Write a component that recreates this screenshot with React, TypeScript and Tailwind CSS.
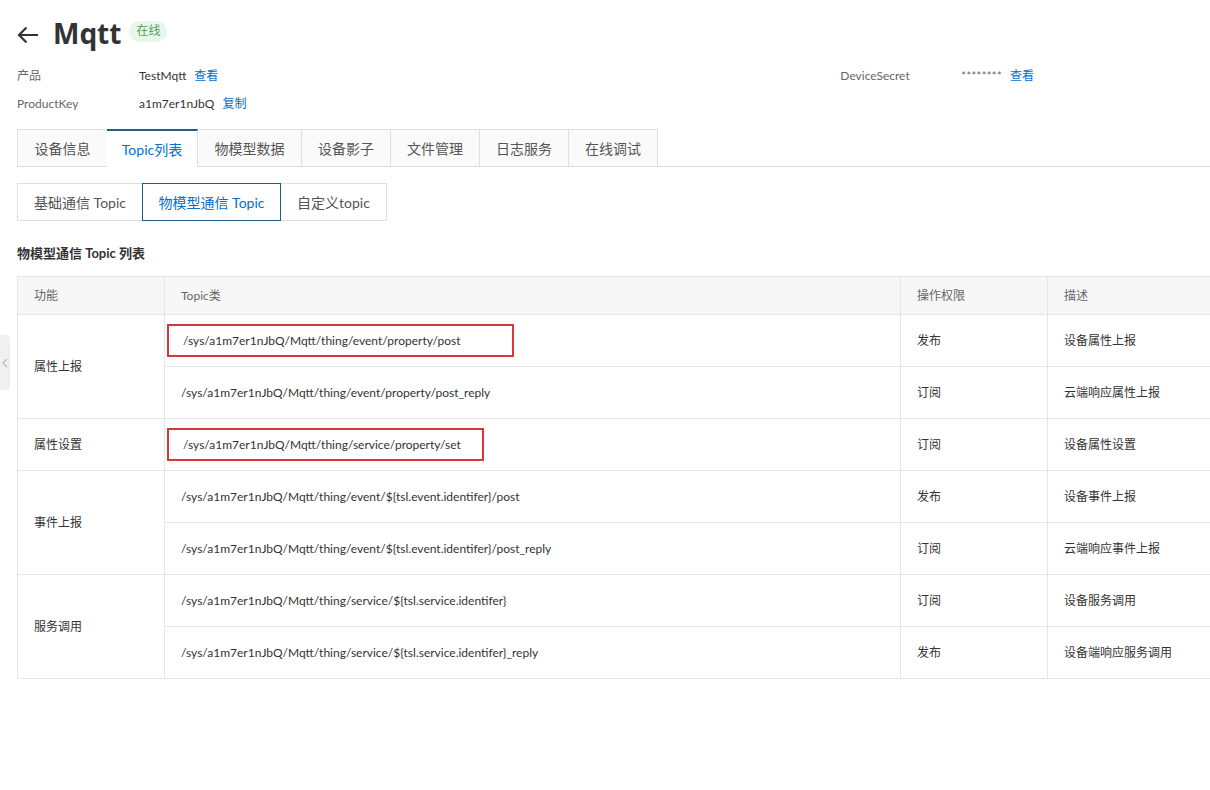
import React from "react";

const font = { fontFamily: 'Lato, "Noto Sans CJK SC", sans-serif' };

const tabs = ["设备信息", "Topic列表", "物模型数据", "设备影子", "文件管理", "日志服务", "在线调试"];
const tabW = ["w-[90px]", "w-[91px]", "w-[104px]", "w-[89px]", "w-[89px]", "w-[89px]", "w-[89px]"];

type Row = { topic: string; perm: string; desc: string; boxed?: string };
const groups: { name: string; rows: Row[] }[] = [
  {
    name: "属性上报",
    rows: [
      { topic: "/sys/a1m7er1nJbQ/Mqtt/thing/event/property/post", perm: "发布", desc: "设备属性上报", boxed: "w-[347px]" },
      { topic: "/sys/a1m7er1nJbQ/Mqtt/thing/event/property/post_reply", perm: "订阅", desc: "云端响应属性上报" },
    ],
  },
  {
    name: "属性设置",
    rows: [{ topic: "/sys/a1m7er1nJbQ/Mqtt/thing/service/property/set", perm: "订阅", desc: "设备属性设置", boxed: "w-[317px]" }],
  },
  {
    name: "事件上报",
    rows: [
      { topic: "/sys/a1m7er1nJbQ/Mqtt/thing/event/${tsl.event.identifer}/post", perm: "发布", desc: "设备事件上报" },
      { topic: "/sys/a1m7er1nJbQ/Mqtt/thing/event/${tsl.event.identifer}/post_reply", perm: "订阅", desc: "云端响应事件上报" },
    ],
  },
  {
    name: "服务调用",
    rows: [
      { topic: "/sys/a1m7er1nJbQ/Mqtt/thing/service/${tsl.service.identifer}", perm: "订阅", desc: "设备服务调用" },
      { topic: "/sys/a1m7er1nJbQ/Mqtt/thing/service/${tsl.service.identifer}_reply", perm: "发布", desc: "设备端响应服务调用" },
    ],
  },
];

export default function App() {
  return (
    <div className="relative w-[1210px] h-[790px] overflow-hidden bg-white text-[#333]" style={font}>
      <div className="pl-[17px] pt-[16px]">
        {/* title */}
        <div className="flex items-center h-[34px]">
          <svg width="22" height="18" viewBox="0 0 22 18" className="mt-[3px]">
            <path d="M21 9H2M9.5 1.5L2 9l7.5 7.5" fill="none" stroke="#333" strokeWidth="2.2" />
          </svg>
          <span className="ml-[14px] text-[28px] font-bold text-[#333] leading-none" style={{ fontFamily: '"Noto Sans", sans-serif' }}>Mqtt</span>
          <span className="ml-[8px] mt-[-4px] h-[21px] px-[7px] rounded-full bg-[#eaf6ea] text-[#4aa55a] text-[12px] flex items-center">在线</span>
        </div>
        {/* info */}
        <div className="mt-[16px] text-[12px]">
          <div className="flex h-[20px] items-center">
            <span className="w-[122px] text-[#666]">产品</span>
            <span className="text-[#333]">TestMqtt</span>
            <span className="ml-[8px] text-[#0070cc]">查看</span>
            <span className="ml-[622px] w-[121px] text-[#666]">DeviceSecret</span>
            <span className="text-[#666] text-[11px] tracking-[0.4px]">********</span>
            <span className="ml-[8px] text-[#0070cc]">查看</span>
          </div>
          <div className="flex h-[20px] items-center mt-[8px]">
            <span className="w-[122px] text-[#666]">ProductKey</span>
            <span className="text-[#333]">a1m7er1nJbQ</span>
            <span className="ml-[8px] text-[#0070cc]">复制</span>
          </div>
        </div>
        {/* tabs */}
        <div className="mt-[15px] flex border-b border-[#dcdcdc] h-[38px]">
          {tabs.map((t, i) => (
            <div
              key={t}
              className={
                "flex items-center justify-center text-[14px] border-[#e0e0e0] " +
                tabW[i] +
                " " +
                (i === 1
                  ? "border-t-2 border-t-[#1f5e8c] border-r border-l-0 bg-white text-[#0070cc] mb-[-1px] h-[38px]"
                  : i === 0
                  ? "border-t border-l border-r-0 bg-[#fafafa] text-[#555]"
                  : "border-t border-r bg-[#fafafa] text-[#555]")
              }
            >
              {t}
            </div>
          ))}
        </div>
        {/* sub tabs */}
        <div className="mt-[16px] flex h-[38px] text-[14px]">
          <div className="w-[125px] flex items-center justify-center border border-[#e0e0e0] border-r-0 text-[#555]">基础通信 Topic</div>
          <div className="w-[139px] flex items-center justify-center border border-[#1b5e8a] text-[#0070cc]">物模型通信 Topic</div>
          <div className="w-[106px] flex items-center justify-center border border-[#e0e0e0] border-l-0 text-[#555]">自定义topic</div>
        </div>
        {/* section title */}
        <div className="mt-[23px] text-[13px] font-bold text-[#333] h-[18px] leading-[18px]">物模型通信 Topic 列表</div>
        {/* table */}
        <div className="mt-[14px]">
          <table className="border-collapse text-[12px] w-[1230px] table-fixed">
            <colgroup>
              <col className="w-[147px]" />
              <col className="w-[736px]" />
              <col className="w-[147px]" />
              <col className="w-[200px]" />
            </colgroup>
            <thead>
              <tr className="h-[38px] bg-[#f7f7f7] text-[#666]">
                <th className="border border-[#e6e6e6] text-left font-normal pl-[16px]">功能</th>
                <th className="border border-[#e6e6e6] text-left font-normal pl-[16px]">Topic类</th>
                <th className="border border-[#e6e6e6] text-left font-normal pl-[16px]">操作权限</th>
                <th className="border border-[#e6e6e6] text-left font-normal pl-[16px]">描述</th>
              </tr>
            </thead>
            <tbody>
              {groups.map((g) =>
                g.rows.map((r, j) => (
                  <tr key={r.topic} className="h-[52px]">
                    {j === 0 && (
                      <td rowSpan={g.rows.length} className="border border-[#e6e6e6] pl-[16px] text-[#333]">
                        {g.name}
                      </td>
                    )}
                    <td className="border border-[#e6e6e6] pl-[16px] text-[#333]">
                      {r.boxed ? (
                        <div className={"ml-[-14px] h-[33px] flex items-center pl-[14px] border-2 border-[#d9363b] " + r.boxed}>{r.topic}</div>
                      ) : (
                        r.topic
                      )}
                    </td>
                    <td className="border border-[#e6e6e6] pl-[16px] text-[#333]">{r.perm}</td>
                    <td className="border border-[#e6e6e6] pl-[16px] text-[#333]">{r.desc}</td>
                  </tr>
                ))
              )}
            </tbody>
          </table>
        </div>
      </div>
      {/* side handle */}
      <div className="absolute left-0 top-[335px] w-[10px] h-[55px] bg-[#f0f0f0] rounded-r-[3px] flex items-center justify-center">
        <svg width="6" height="10" viewBox="0 0 6 10">
          <path d="M5 1L1 5l4 4" fill="none" stroke="#bbb" strokeWidth="1.2" />
        </svg>
      </div>
    </div>
  );
}
